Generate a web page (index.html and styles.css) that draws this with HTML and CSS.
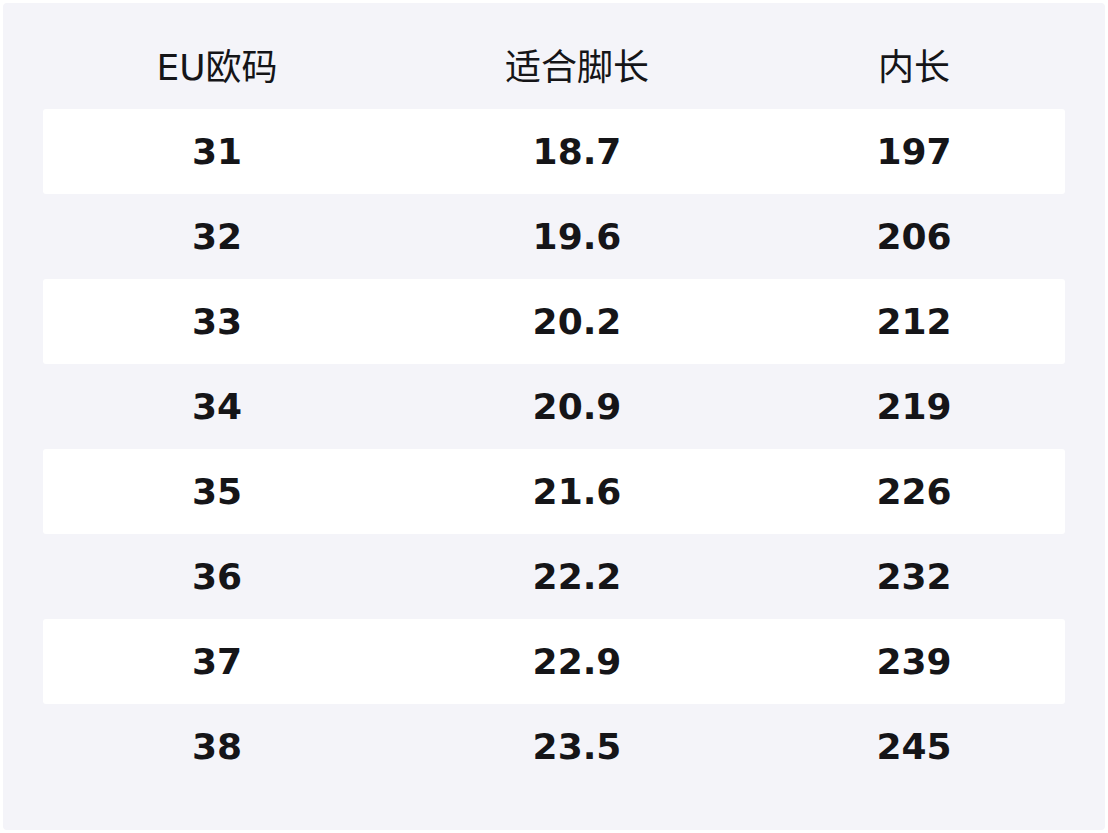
FILE: index.html
```html
<!DOCTYPE html>
<html lang="zh">
<head>
<meta charset="utf-8">
<link rel="stylesheet" href="styles.css">
</head>
<body>
<div class="panel">
  <div class="row head">
    <div class="cell">EU欧码</div>
    <div class="cell">适合脚长</div>
    <div class="cell">内长</div>
  </div>
  <div class="row light"><div class="cell">31</div><div class="cell">18.7</div><div class="cell">197</div></div>
  <div class="row"><div class="cell">32</div><div class="cell">19.6</div><div class="cell">206</div></div>
  <div class="row light"><div class="cell">33</div><div class="cell">20.2</div><div class="cell">212</div></div>
  <div class="row"><div class="cell">34</div><div class="cell">20.9</div><div class="cell">219</div></div>
  <div class="row light"><div class="cell">35</div><div class="cell">21.6</div><div class="cell">226</div></div>
  <div class="row"><div class="cell">36</div><div class="cell">22.2</div><div class="cell">232</div></div>
  <div class="row light"><div class="cell">37</div><div class="cell">22.9</div><div class="cell">239</div></div>
  <div class="row"><div class="cell">38</div><div class="cell">23.5</div><div class="cell">245</div></div>
</div>
</body>
</html>
```
FILE: styles.css
```css
html, body {
  margin: 0;
  padding: 0;
  background: #ffffff;
}
body {
  padding: 3px;
  font-family: "DejaVu Sans", "Noto Sans CJK SC", sans-serif;
  color: #151518;
}
.panel {
  background: #f4f4f9;
  border-radius: 4px;
  width: 1102px;
  height: 827px;
  box-sizing: border-box;
  padding: 0 40px 41px;
}
.row {
  display: grid;
  grid-template-columns: 348px 372px 1fr;
  height: 85px;
  align-items: center;
  text-align: center;
  font-size: 36px;
  font-weight: bold;
}
.row.light {
  background: #ffffff;
  border-radius: 3px;
}
.row.head {
  height: auto;
  padding: 40px 0 16px;
  line-height: 50px;
  font-weight: normal;
  font-size: 36px;
}
```
